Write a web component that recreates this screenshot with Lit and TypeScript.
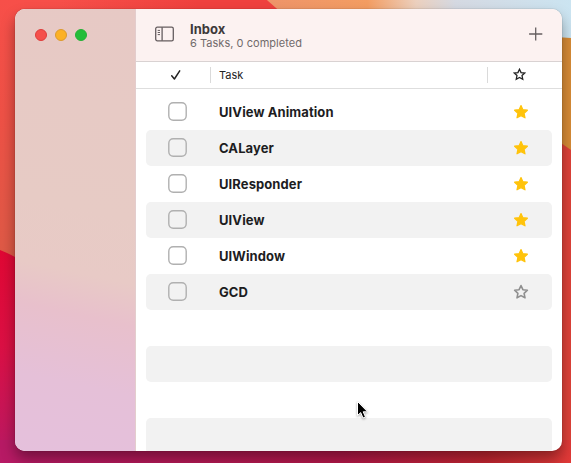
import { LitElement, html, css, svg } from "lit";
import { customElement, property } from "lit/decorators.js";

interface Task {
  title: string;
  starred: boolean;
}

const TASKS: Task[] = [
  { title: "UIView Animation", starred: true },
  { title: "CALayer", starred: true },
  { title: "UIResponder", starred: true },
  { title: "UIView", starred: true },
  { title: "UIWindow", starred: true },
  { title: "GCD", starred: false },
];

const EMPTY_ROWS = 4;

const starPath = svg`<path d="M8 1.6 9.9 5.7 14.4 6.2 11.1 9.3 12 13.8 8 11.6 4 13.8 4.9 9.3 1.6 6.2 6.1 5.7Z"/>`;

@customElement("desktop-wallpaper")
export class DesktopWallpaper extends LitElement {
  static styles = css`
    :host { display: block; }
    .art { display: block; width: 100%; height: 100%; }
  `;
  render() {
    return html`<svg class="art" viewBox="0 0 571 463" preserveAspectRatio="none">
      <defs>
        <linearGradient id="coral" x1="0" y1="0" x2="0" y2="1">
          <stop offset="0" stop-color="#f74f49"/><stop offset=".25" stop-color="#ee5146"/>
          <stop offset=".56" stop-color="#dd5a46"/>
        </linearGradient>
        <linearGradient id="top" x1="0" y1="0" x2="1" y2="0">
          <stop offset="0" stop-color="#ef413e" stop-opacity="0"/><stop offset=".6" stop-color="#ef413e"/>
        </linearGradient>
        <linearGradient id="sky" gradientUnits="userSpaceOnUse" x1="267" y1="0" x2="571" y2="0">
          <stop offset="0" stop-color="#ee946a"/><stop offset=".33" stop-color="#f39d62"/>
          <stop offset=".49" stop-color="#ecd0be"/><stop offset=".62" stop-color="#d5d9e2"/>
          <stop offset="1" stop-color="#cbe4f1"/>
        </linearGradient>
        <linearGradient id="crimson" gradientUnits="userSpaceOnUse" x1="0" y1="250" x2="0" y2="463">
          <stop offset="0" stop-color="#e00834"/><stop offset=".45" stop-color="#db1044"/>
          <stop offset="1" stop-color="#b71a65"/>
        </linearGradient>
        <linearGradient id="floor" gradientUnits="userSpaceOnUse" x1="0" y1="0" x2="571" y2="0">
          <stop offset="0" stop-color="#b71a65"/><stop offset=".6" stop-color="#b7184a"/>
          <stop offset=".85" stop-color="#c52631"/><stop offset="1" stop-color="#e13a38"/>
        </linearGradient>
      </defs>
      <rect width="571" height="463" fill="url(#coral)"/>
      <path d="M60 0H267L290 20H60Z" fill="url(#top)"/>
      <path d="M267 0H571V60H340Q295 25 267 0Z" fill="url(#sky)"/>
      <path d="M540 36 571 38V160H540Z" fill="#d78b36"/>
      <path d="M540 130Q556 139 571 150V463H300V200Z" fill="#df4239"/>
      <path d="M0 250Q25 260 50 280V463H0Z" fill="url(#crimson)"/>
      <path d="M0 440H571V463H0Z" fill="url(#floor)"/>
    </svg>`;
  }
}

@customElement("task-row")
export class TaskRow extends LitElement {
  @property({ attribute: false }) task?: Task;

  static styles = css`
    :host { display: block; }
    .row {
      height: 36px;
      display: grid;
      grid-template-columns: 73px 1fr 62px;
      align-items: center;
    }
    .box {
      display: block;
      width: 19px;
      height: 19px;
      margin: 0 0 1px 22px;
      fill: none;
      stroke: #b0b0b0;
      stroke-width: 1.4;
    }
    .title {
      font-size: 13px;
      line-height: 18px;
      font-weight: 700;
      letter-spacing: 0.09px;
      color: #1d1d1f;
    }
    .star {
      width: 16px;
      height: 16px;
      justify-self: center;
      fill: #ffc30b;
      stroke: #ffc30b;
      stroke-width: 1.2;
      stroke-linejoin: round;
    }
    .star.off { fill: none; stroke: #8f8f8f; stroke-width: 1.6; }
  `;
  render() {
    const t = this.task;
    if (!t) return html`<div class="row"></div>`;
    return html`<div class="row">
      <svg class="box" viewBox="0 0 19 19"><rect x=".8" y=".8" width="17.4" height="17.4" rx="4.4"/></svg>
      <span class="title">${t.title}</span>
      <svg class="star ${t.starred ? "" : "off"}" viewBox="0 0 16 16">${starPath}</svg>
    </div>`;
  }
}

@customElement("app-root")
export class AppRoot extends LitElement {
  static styles = css`
    :host {
      display: block;
      position: relative;
      width: 571px;
      height: 463px;
      box-sizing: border-box;
      padding: 9px 9px 12px 15px;
      overflow: hidden;
      font-family: Inter, "Liberation Sans", sans-serif;
    }
    .wallpaper { position: absolute; inset: 0; }
    .window {
      position: relative;
      height: 442px;
      display: flex;
      border-radius: 10px;
      overflow: hidden;
      background: #fff;
    }
    .shade {
      position: relative;
      border-radius: 10px;
      box-shadow: 0 0 1px rgba(0, 0, 0, 0.55), 0 8px 14px rgba(0, 0, 0, 0.36);
    }
    .sidebar {
      box-sizing: border-box;
      flex: 0 0 121px;
      border-right: 1px solid #e3cdcd;
      background: linear-gradient(192deg, #e7c9c5 0%, #e7cbc5 45%, #e8cac6 59%, #e8c0cc 68%, #e5c0d8 83%, #e5c0dc 100%);
    }
    .lights { display: flex; gap: 8px; padding: 20px 0 0 20px; }
    .light { box-sizing: border-box; width: 12px; height: 12px; border-radius: 50%; }
    .close { background: #f5504b; border: 1px solid #df3c3b; }
    .minimize { background: #fcb125; border: 1px solid #dc9a2d; }
    .zoom { background: #24bd3a; border: 1px solid #25b137; }
    .main { flex: 1; min-width: 0; display: flex; flex-direction: column; }
    .toolbar {
      box-sizing: border-box;
      flex: 0 0 53px;
      display: flex;
      align-items: flex-start;
      padding: 0 19px;
      background: #fcf2f1;
      border-bottom: 1px solid #d9d2d2;
    }
    .panel-icon { width: 20px; height: 16px; margin-top: 17px; }
    .heading { flex: 1; padding: 12px 0 0 15px; }
    .name { font-size: 13px; line-height: 16px; font-weight: 700; color: #3e393a; }
    .summary { font-size: 11px; line-height: 13px; letter-spacing: 0.03px; color: #716a6b; }
    .plus { width: 14px; height: 14px; margin: 18px 0 0; }
    .columns {
      box-sizing: border-box;
      flex: 0 0 27px;
      display: grid;
      grid-template-columns: 74px 277px 1fr;
      align-items: center;
      border-bottom: 1px solid #dedede;
      font-size: 11px;
      color: #222;
    }
    .check { width: 12px; height: 12px; margin-left: 34px; }
    .column { box-sizing: border-box; height: 16px; line-height: 16px; border: 0 solid #dadada; border-left-width: 1px; }
    .task { padding-left: 8px; }
    .fav { padding: 1px 0 0 25px; }
    .outline { display: block; width: 13px; height: 13px; fill: none; stroke: #222; stroke-width: 1.6; }
    .list { flex: 1; min-height: 0; overflow: hidden; padding: 5px 10px 0; }
    .item { border-radius: 5px; }
    .item.alt { background: #f2f2f2; }
    .cursor { position: absolute; left: 355px; top: 400px; width: 16px; height: 21px; filter: drop-shadow(0 1px 1px rgba(0, 0, 0, 0.35)); }
  `;

  render() {
    const rows: (Task | undefined)[] = [...TASKS, ...Array(EMPTY_ROWS).fill(undefined)];
    const done = 0;
    return html`
      <desktop-wallpaper class="wallpaper"></desktop-wallpaper>
      <div class="shade">
        <div class="window">
          <aside class="sidebar">
            <div class="lights">
              <span class="light close"></span>
              <span class="light minimize"></span>
              <span class="light zoom"></span>
            </div>
          </aside>
          <main class="main">
            <header class="toolbar">
              <svg class="panel-icon" viewBox="0 0 20 16" fill="none" stroke="#655d5f" stroke-width="1.3">
                <rect x=".7" y="1.2" width="17.6" height="13.6" rx="1.6"/>
                <path d="M7.1 1.2V14.8"/>
                <path d="M2.7 4.4H5M2.7 6.5H5M2.7 8.6H5" stroke-width="1"/>
              </svg>
              <div class="heading">
                <div class="name">Inbox</div>
                <div class="summary">${TASKS.length} Tasks, ${done} completed</div>
              </div>
              <svg class="plus" viewBox="0 0 14 14" stroke="#655f60" stroke-width="1.3">
                <path d="M6.7.4V13.6M.1 7H13.3"/>
              </svg>
            </header>
            <div class="columns">
              <svg class="check" viewBox="0 0 12 12" fill="none" stroke="#222" stroke-width="1.5" stroke-linecap="round" stroke-linejoin="round">
                <path d="M1.7 6.8 4.4 10 9.7 1.8"/>
              </svg>
              <div class="column task">Task</div>
              <div class="column fav"><svg class="outline" viewBox="0 0 16 16">${starPath}</svg></div>
            </div>
            <div class="list">
              ${rows.map((t, i) => html`<task-row class="item ${i % 2 ? "alt" : ""}" .task=${t}></task-row>`)}
            </div>
          </main>
        </div>
      </div>
      <svg class="cursor" viewBox="0 0 16 21">
        <path d="M2.5 1.5V15.5L5.7 12.6 8 18 10.5 17 8.2 11.8H12.6Z" fill="#000" stroke="#fff" stroke-width="1"/>
      </svg>`;
  }
}
